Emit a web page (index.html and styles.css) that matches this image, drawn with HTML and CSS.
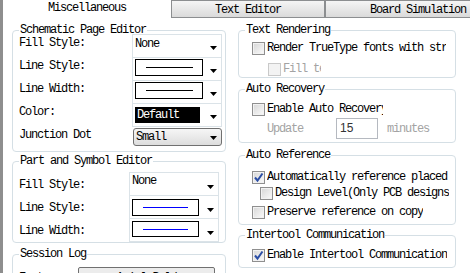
FILE: index.html
```html
<!DOCTYPE html>
<html lang="en">
<head>
    <meta charset="UTF-8">
    <title>Options</title>
    <link rel="stylesheet" href="styles.css">
</head>
<body>
    <div class="window">
        <div class="tabs">
            <div class="tab tab-active">Miscellaneous</div>
            <div class="tab tab-text">Text Editor</div>
            <div class="tab tab-board">Board Simulation</div>
        </div>

        <div class="panes">
            <!-- left column -->
            <div class="col col-left">
                <div class="group group-sch">
                    <div class="group-title">Schematic Page Editor</div>
                    <div class="field-list">
                        <div class="field">
                            <span class="field-label">Fill Style:</span>
                            <div class="cell">
                                <span class="cell-text">None</span>
                                <svg class="arrow" width="7" height="4" viewBox="0 0 7 4"><path d="M0 0h7L3.5 4z"/></svg>
                            </div>
                        </div>
                        <div class="field">
                            <span class="field-label">Line Style:</span>
                            <div class="cell">
                                <div class="swatch"><div class="swatch-line"></div></div>
                                <svg class="arrow" width="7" height="4" viewBox="0 0 7 4"><path d="M0 0h7L3.5 4z"/></svg>
                            </div>
                        </div>
                        <div class="field">
                            <span class="field-label">Line Width:</span>
                            <div class="cell">
                                <div class="swatch"><div class="swatch-line"></div></div>
                                <svg class="arrow" width="7" height="4" viewBox="0 0 7 4"><path d="M0 0h7L3.5 4z"/></svg>
                            </div>
                        </div>
                        <div class="field">
                            <span class="field-label">Color:</span>
                            <div class="cell">
                                <div class="color-box">Default</div>
                                <svg class="arrow" width="7" height="4" viewBox="0 0 7 4"><path d="M0 0h7L3.5 4z"/></svg>
                            </div>
                        </div>
                        <div class="field field-combo">
                            <span class="field-label">Junction Dot</span>
                            <div class="combo">
                                <span>Small</span>
                                <svg class="arrow" width="7" height="4" viewBox="0 0 7 4"><path d="M0 0h7L3.5 4z"/></svg>
                            </div>
                        </div>
                    </div>
                </div>

                <div class="group group-part">
                    <div class="group-title">Part and Symbol Editor</div>
                    <div class="field-list">
                        <div class="field">
                            <span class="field-label">Fill Style:</span>
                            <div class="cell">
                                <span class="cell-text">None</span>
                                <svg class="arrow" width="7" height="4" viewBox="0 0 7 4"><path d="M0 0h7L3.5 4z"/></svg>
                            </div>
                        </div>
                        <div class="field">
                            <span class="field-label">Line Style:</span>
                            <div class="cell">
                                <div class="swatch"><div class="swatch-line blue"></div></div>
                                <svg class="arrow" width="7" height="4" viewBox="0 0 7 4"><path d="M0 0h7L3.5 4z"/></svg>
                            </div>
                        </div>
                        <div class="field">
                            <span class="field-label">Line Width:</span>
                            <div class="cell">
                                <div class="swatch swatch-thin"><div class="swatch-line blue"></div></div>
                                <svg class="arrow" width="7" height="4" viewBox="0 0 7 4"><path d="M0 0h7L3.5 4z"/></svg>
                            </div>
                        </div>
                    </div>
                </div>

                <div class="group group-log">
                    <div class="group-title">Session Log</div>
                    <div class="log-row">
                        <span class="log-label">Font:</span>
                        <div class="log-button">Arial Bold</div>
                    </div>
                </div>
            </div>

            <!-- right column -->
            <div class="col col-right">
                <div class="group group-render">
                    <div class="group-title">Text Rendering</div>
                    <div class="check">
                        <span class="box"></span>
                        <span class="check-label w-render">Render TrueType fonts with stroke</span>
                    </div>
                    <div class="check check-sub disabled">
                        <span class="box"></span>
                        <span class="check-label w-fill">Fill text</span>
                    </div>
                </div>

                <div class="group group-recovery">
                    <div class="group-title">Auto Recovery</div>
                    <div class="check">
                        <span class="box"></span>
                        <span class="check-label w-recover">Enable Auto Recovery</span>
                    </div>
                    <div class="update-row">
                        <span class="muted">Update</span>
                        <div class="num-input">15</div>
                        <span class="muted minutes">minutes</span>
                    </div>
                </div>

                <div class="group group-ref">
                    <div class="group-title">Auto Reference</div>
                    <div class="check">
                        <span class="box checked">
                            <svg width="11" height="11" viewBox="0 0 11 11"><path d="M2 5.5l2.5 3L9.5 1.5" fill="none" stroke="#2b4ea6" stroke-width="2"/></svg>
                        </span>
                        <span class="check-label">Automatically reference placed parts</span>
                    </div>
                    <div class="check check-design">
                        <span class="box"></span>
                        <span class="check-label w-design">Design Level(Only PCB designs)</span>
                    </div>
                    <div class="check check-preserve">
                        <span class="box"></span>
                        <span class="check-label">Preserve reference on copy</span>
                    </div>
                </div>

                <div class="group group-inter">
                    <div class="group-title">Intertool Communication</div>
                    <div class="check">
                        <span class="box checked">
                            <svg width="11" height="11" viewBox="0 0 11 11"><path d="M2 5.5l2.5 3L9.5 1.5" fill="none" stroke="#2b4ea6" stroke-width="2"/></svg>
                        </span>
                        <span class="check-label">Enable Intertool Communication</span>
                    </div>
                </div>
            </div>
        </div>
    </div>
</body>
</html>
```

FILE: styles.css
```css
/* General */
body {
    margin: 0;
    background: #fff;
    color: #000;
    font-family: 'Liberation Mono', 'Noto Sans CJK SC', monospace;
    font-size: 12px;
    letter-spacing: -1.2px;
}

.window {
    box-sizing: border-box;
    height: 273px;
    border-left: 3px solid #8e8e8e;
    overflow: hidden;
}

/* Tabs */
.tabs {
    display: flex;
    height: 18px;
    white-space: nowrap;
}

.tab {
    box-sizing: border-box;
    flex: none;
    height: 18px;
    padding-top: 2px;
    line-height: 14px;
    text-align: center;
    border: 1px solid #8c8e90;
    background: linear-gradient(#f5f5f5, #dadada);
}

.tab-active {
    width: 168px;
    padding-top: 0;
    line-height: 16px;
    border: none;
    background: #fff;
}

.tab-text {
    width: 154px;
}

.tab-board {
    width: 186px;
}

/* Columns */
.panes {
    display: flex;
    gap: 12px;
    padding: 12px 0 0 9px;
}

.col-left {
    width: 214px;
    flex: none;
}

.col-right {
    width: 218px;
    flex: none;
}

/* Group boxes */
.group {
    box-sizing: border-box;
    border: 1px solid #d5dfe5;
    border-radius: 4px;
    padding: 0 3px 0 6px;
}

.group-title {
    display: table;
    margin-top: -8px;
    padding: 0 1px;
    line-height: 14px;
    background: #fff;
}

/* Dropdown rows (left) */
.field-list {
    margin-top: -3px;
}

.field {
    display: flex;
}

.field + .field {
    margin-top: -1px;
}

.field-label {
    width: 113px;
    flex: none;
    padding-top: 3px;
    line-height: 12px;
}

.cell {
    box-sizing: border-box;
    display: flex;
    align-items: flex-start;
    width: 90px;
    height: 24px;
    border: 1px solid #dbe3e8;
}

.cell-text {
    padding: 3px 0 0 2px;
    line-height: 12px;
    flex: 1;
}

.arrow {
    margin: 11px 4px 0 auto;
    flex: none;
}

.swatch {
    box-sizing: border-box;
    display: flex;
    align-items: center;
    justify-content: center;
    width: 68px;
    height: 17px;
    margin: 1px 0 0 2px;
    border: 1px solid #000;
}

.swatch-line {
    width: 47px;
    height: 1px;
    background: #000;
}

.swatch-line.blue {
    width: 45px;
    background: #0000ff;
}

.color-box {
    width: 65px;
    height: 16px;
    margin: 3px 0 0 2px;
    padding-left: 2px;
    box-sizing: border-box;
    line-height: 16px;
    background: #000;
    color: #fff;
}

.field-combo {
    height: 24px;
}

.combo {
    box-sizing: border-box;
    display: flex;
    align-items: center;
    width: 89px;
    height: 18px;
    margin: 2px 0 0 1px;
    padding-left: 2px;
    border: 1px solid #707070;
    border-radius: 3px;
    background: linear-gradient(#f6f6f6, #dddddd);
}

.combo .arrow {
    margin: 1px 4px 0 auto;
}

.group-sch {
    padding-bottom: 1px;
}

.group-part {
    margin-top: 9px;
}

.group-part .field-list {
    margin-top: 4px;
}

.group-part .field-label {
    width: 110px;
    padding-top: 7px;
}

.group-part .cell-text {
    padding-top: 2px;
}

.group-part .swatch {
    width: 67px;
    margin: 3px 0 0 2px;
}

.group-part .swatch-thin {
    height: 16px;
    margin-top: 2px;
}

.group-part .arrow {
    margin-top: 12px;
}

/* Session log */
.group-log {
    margin-top: 11px;
    height: 40px;
}

.log-row {
    display: flex;
    margin-top: 6px;
}

.log-label {
    width: 59px;
    padding-top: 4px;
}

.log-button {
    box-sizing: border-box;
    width: 137px;
    height: 20px;
    padding-top: 3px;
    text-align: center;
    border: 1px solid #707070;
    border-radius: 2px;
    background: #ececec;
}

/* Checkboxes (right) */
.check {
    display: flex;
    align-items: center;
    height: 16px;
    padding-left: 7px;
}

.box {
    box-sizing: border-box;
    display: flex;
    align-items: center;
    justify-content: center;
    flex: none;
    width: 13px;
    height: 13px;
    border: 1px solid #8f8f8f;
    background: linear-gradient(135deg, #d6d6d6, #fbfbfb);
    box-shadow: inset 0 0 0 1px #f2f2f2;
}

.check-label {
    margin-left: 2px;
    max-width: 181px;
    overflow: hidden;
    white-space: nowrap;
    line-height: 14px;
}

.disabled .box {
    border-color: #c9c9c9;
    background: #f3f3f3;
    box-shadow: none;
}

.disabled .check-label,
.muted {
    color: #a3a3a3;
}

.w-render { max-width: 179px; }
.w-fill { max-width: 38px; }
.w-recover { max-width: 116px; }
.w-design { max-width: 174px; }

.group-render .check {
    margin-top: 3px;
}

.group-render .check-sub {
    margin-top: 5px;
    padding-left: 23px;
}

.group-recovery {
    margin-top: 11px;
    padding-bottom: 3px;
}

.group-recovery .check {
    margin-top: 5px;
}

.update-row {
    display: flex;
    align-items: center;
    height: 21px;
    margin-top: 1px;
    padding-left: 22px;
}

.num-input {
    box-sizing: border-box;
    width: 42px;
    height: 21px;
    margin-left: 33px;
    padding: 2px 0 0 3px;
    border: 1px solid #b5b9c0;
    font-family: 'Liberation Sans', sans-serif;
    font-size: 12px;
    letter-spacing: 0;
    color: #333;
}

.minutes {
    margin-left: 9px;
}

.group-ref {
    margin-top: 12px;
    padding-bottom: 4px;
}

.group-ref .check {
    margin-top: 7px;
}

.group-ref .check-design {
    margin-top: 0;
    padding-left: 15px;
}

.group-ref .check-preserve {
    margin-top: 3px;
}

.group-inter {
    margin-top: 10px;
    padding-bottom: 4px;
}

.group-inter .check {
    margin-top: 5px;
}
```
